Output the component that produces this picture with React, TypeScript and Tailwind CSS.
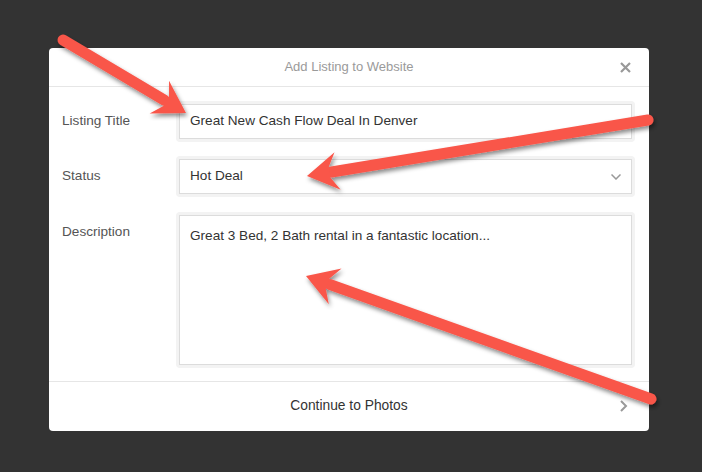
import React from "react";

type Pt = [number, number];

// annotation arrow: tail -> tip, drawn on the overlay svg
function Arrow({ from, to }: { from: Pt; to: Pt }) {
  const dx = to[0] - from[0];
  const dy = to[1] - from[1];
  const len = Math.hypot(dx, dy);
  const ux = dx / len;
  const uy = dy / len;
  const vx = -uy;
  const vy = ux;
  const at = (back: number, side: number): string =>
    `${to[0] - ux * back + vx * side},${to[1] - uy * back + vy * side}`;
  const head = [at(0, 0), at(31, 19), at(23, 5.5), at(23, -5.5), at(31, -19)].join(" ");
  const end = [to[0] - ux * 25, to[1] - uy * 25];
  return (
    <g filter="url(#shadow)">
      <line
        x1={from[0]}
        y1={from[1]}
        x2={end[0]}
        y2={end[1]}
        stroke="#f9564a"
        strokeWidth={11}
        strokeLinecap="round"
      />
      <polygon points={head} fill="#f9564a" strokeLinejoin="round" />
    </g>
  );
}

function Field({ children, tall }: { children: React.ReactNode; tall?: boolean }) {
  return (
    <div className="flex-1 p-[3px] bg-[#f3f3f3] rounded-[4px]">
      <div
        className={`bg-white border border-[#dcdcdc] px-[10px] text-[13.6px] text-[#333] ${
          tall ? "h-[150px] pt-[11px] leading-[18px]" : "h-[35px] flex items-center"
        }`}
      >
        {children}
      </div>
    </div>
  );
}

function Row({ label, children, className }: { label: string; children: React.ReactNode; className?: string }) {
  return (
    <div className={`flex items-start ${className ?? ""}`}>
      <div className="w-[114px] pt-[12px] leading-[16px] text-[13.6px] text-[#555]">{label}</div>
      {children}
    </div>
  );
}

export default function App() {
  return (
    <div
      className="relative w-[702px] h-[472px] overflow-hidden bg-[#333333] pl-[49px] pt-[48px]"
      style={{ fontFamily: '"Liberation Sans", Arial, sans-serif' }}
    >
      <div className="w-[600px] bg-white rounded-[4px] flex flex-col">
        {/* Header */}
        <div className="relative h-[39px] border-b border-[#e6e6e6] flex items-center justify-center">
          <span className="text-[13px] text-[#9a9a9a]">Add Listing to Website</span>
          <button className="absolute right-[18px] top-[14px] w-[11px] h-[11px]">
            <svg viewBox="0 0 11 11" className="w-[11px] h-[11px]">
              <path d="M1 1 L10 10 M10 1 L1 10" stroke="#999" strokeWidth={2.2} />
            </svg>
          </button>
        </div>

        {/* Form */}
        <div className="pt-[14px] pb-[13px] pl-[13px] pr-[14px]">
          <Row label="Listing Title" className="mb-[14px]">
            <Field>Great New Cash Flow Deal In Denver</Field>
          </Row>
          <Row label="Status" className="mb-[15px]">
            <div className="flex-1 p-[3px] bg-[#f3f3f3] rounded-[4px]">
              <div className="h-[35px] bg-white border border-[#dcdcdc] pl-[10px] pr-[10px] flex items-center justify-between text-[13.6px] text-[#333]">
                <span>Hot Deal</span>
                <svg viewBox="0 0 10 6" className="w-[10px] h-[6px]">
                  <path d="M0.5 0.5 L5 5 L9.5 0.5" fill="none" stroke="#999" strokeWidth={1.5} />
                </svg>
              </div>
            </div>
          </Row>
          <Row label="Description">
            <Field tall>Great 3 Bed, 2 Bath rental in a fantastic location...</Field>
          </Row>
        </div>

        {/* Footer */}
        <div className="relative h-[50px] border-t border-[#e6e6e6] flex items-center justify-center">
          <span className="text-[13.8px] text-[#333]">Continue to Photos</span>
          <svg viewBox="0 0 8 12" className="absolute right-[21px] top-[18px] w-[8px] h-[12px]">
            <path d="M1 1 L6 6 L1 11" fill="none" stroke="#999" strokeWidth={2} />
          </svg>
        </div>
      </div>

      {/* Annotation arrows */}
      <svg className="absolute inset-0 pointer-events-none" width={702} height={472}>
        <defs>
          <filter id="shadow" x="-20%" y="-20%" width="140%" height="140%">
            <feDropShadow dx="1.5" dy="3" stdDeviation="2" floodColor="#000" floodOpacity="0.45" />
          </filter>
        </defs>
        <Arrow from={[63, 40]} to={[186, 113]} />
        <Arrow from={[648, 120]} to={[307, 176]} />
        <Arrow from={[651, 399]} to={[306, 276]} />
      </svg>
    </div>
  );
}
